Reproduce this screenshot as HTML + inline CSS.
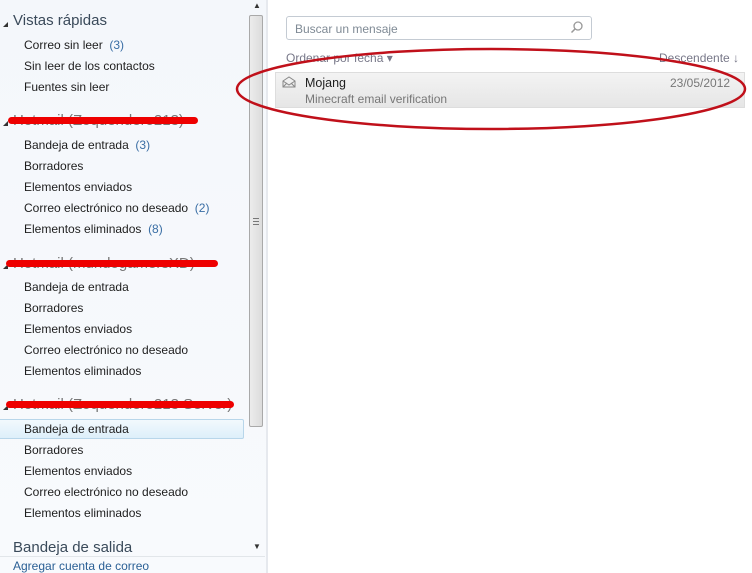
<!DOCTYPE html><html><head><style>
body{margin:0;width:752px;height:573px;overflow:hidden;font-family:"Liberation Sans",sans-serif;background:#fff;position:relative}
.l{position:absolute;left:0;top:0;width:266px;height:573px;background:linear-gradient(#f4f7fb,#f8fafd)}
.t{position:absolute;font-size:12px;color:#1e1e1e;white-space:nowrap}
.h{position:absolute;font-size:15px;color:#3a4a5a;white-space:nowrap}
.n{color:#3a6ea5}
.tri{position:absolute;width:0;height:0;border-left:5px solid transparent;border-bottom:5px solid #333}
.red{position:absolute;height:7px;background:#e00;border-radius:4px}
</style></head><body>
<div class="l"></div>
<div style="position:absolute;left:266px;top:0;width:2px;height:573px;background:#e6e9ee"></div>
<div style="position:absolute;left:249px;top:15px;width:14px;height:412px;background:linear-gradient(90deg,#ececec,#dcdcdc);border:1px solid #a9a9a9;border-radius:2px;box-sizing:border-box"></div>
<div style="position:absolute;left:253px;top:218px;width:6px;height:7px;border-top:1px solid #777;border-bottom:1px solid #777;box-sizing:border-box"><div style="margin-top:2px;border-top:1px solid #777"></div></div>
<div class="t" style="left:253px;top:1px;font-size:8px;color:#333">▲</div>
<div class="t" style="left:253px;top:542px;font-size:8px;color:#333">▼</div>
<div class="tri" style="left:3px;top:22px"></div><div class="h" style="left:13px;top:12px">Vistas rápidas</div>
<div class="t" style="left:24px;top:38px">Correo sin leer &nbsp;<span class="n">(3)</span></div>
<div class="t" style="left:24px;top:59px">Sin leer de los contactos</div>
<div class="t" style="left:24px;top:80px">Fuentes sin leer</div>
<div class="tri" style="left:3px;top:121px"></div><div class="h" style="left:13px;top:112px;color:#777">Hotmail (Zoquendero213)</div><div class="red" style="left:8px;top:117px;width:190px"></div>
<div class="t" style="left:24px;top:138px">Bandeja de entrada &nbsp;<span class="n">(3)</span></div>
<div class="t" style="left:24px;top:159px">Borradores</div>
<div class="t" style="left:24px;top:180px">Elementos enviados</div>
<div class="t" style="left:24px;top:201px">Correo electrónico no deseado &nbsp;<span class="n">(2)</span></div>
<div class="t" style="left:24px;top:222px">Elementos eliminados &nbsp;<span class="n">(8)</span></div>
<div class="tri" style="left:3px;top:264px"></div><div class="h" style="left:13px;top:255px;color:#777">Hotmail (mundogamersXD)</div><div class="red" style="left:6px;top:260px;width:212px"></div>
<div class="t" style="left:24px;top:280px">Bandeja de entrada</div>
<div class="t" style="left:24px;top:301px">Borradores</div>
<div class="t" style="left:24px;top:322px">Elementos enviados</div>
<div class="t" style="left:24px;top:343px">Correo electrónico no deseado</div>
<div class="t" style="left:24px;top:364px">Elementos eliminados</div>
<div class="tri" style="left:3px;top:405px"></div><div class="h" style="left:13px;top:396px;color:#777">Hotmail (Zoquendero213 Server)</div><div class="red" style="left:6px;top:401px;width:228px"></div>
<div style="position:absolute;left:0;top:419px;width:244px;height:20px;background:linear-gradient(#f2f9fd,#ddeffa);border:1px solid #b8d6ea;border-left:none;border-radius:0 2px 2px 0;box-sizing:border-box"></div>
<div class="t" style="left:24px;top:422px">Bandeja de entrada</div>
<div class="t" style="left:24px;top:443px">Borradores</div>
<div class="t" style="left:24px;top:464px">Elementos enviados</div>
<div class="t" style="left:24px;top:485px">Correo electrónico no deseado</div>
<div class="t" style="left:24px;top:506px">Elementos eliminados</div>
<div class="h" style="left:13px;top:539px">Bandeja de salida</div>
<div style="position:absolute;left:0;top:556px;width:265px;height:1px;background:#e2e6ea"></div>
<div class="t" style="left:13px;top:559px;color:#2a5f95">Agregar cuenta de correo</div>
<div style="position:absolute;left:286px;top:16px;width:306px;height:24px;border:1px solid #c4cbd3;border-radius:3px;box-sizing:border-box;background:#fff"></div>
<div class="t" style="left:295px;top:22px;color:#7f8a95">Buscar un mensaje</div>
<svg style="position:absolute;left:570px;top:20px" width="14" height="14"><circle cx="8" cy="6" r="4" fill="none" stroke="#999" stroke-width="1.3"/><path d="M5 9L1.5 12.5" stroke="#999" stroke-width="1.5"/></svg>
<div class="t" style="left:286px;top:51px;color:#778">Ordenar por fecha ▾</div>
<div class="t" style="left:659px;top:51px;color:#778">Descendente ↓</div>
<div style="position:absolute;left:275px;top:72px;width:470px;height:36px;background:linear-gradient(#f3f3f3,#e6e6e6);border:1px solid #ddd;box-sizing:border-box"></div>
<svg style="position:absolute;left:282px;top:76px" width="14" height="12"><path d="M1 5L7 1L13 5V11H1Z M1 5L7 9L13 5 M1 11L5 7 M13 11L9 7" fill="none" stroke="#888"/></svg>
<div class="t" style="left:305px;top:76px;font-size:12.5px">Mojang</div>
<div class="t" style="left:305px;top:92px;color:#777">Minecraft email verification</div>
<div class="t" style="left:670px;top:76px;color:#777">23/05/2012</div>
<svg style="position:absolute;left:0;top:0" width="752" height="573"><ellipse cx="491" cy="89" rx="254" ry="40" fill="none" stroke="#c0101a" stroke-width="2.5"/></svg>
</body></html>
